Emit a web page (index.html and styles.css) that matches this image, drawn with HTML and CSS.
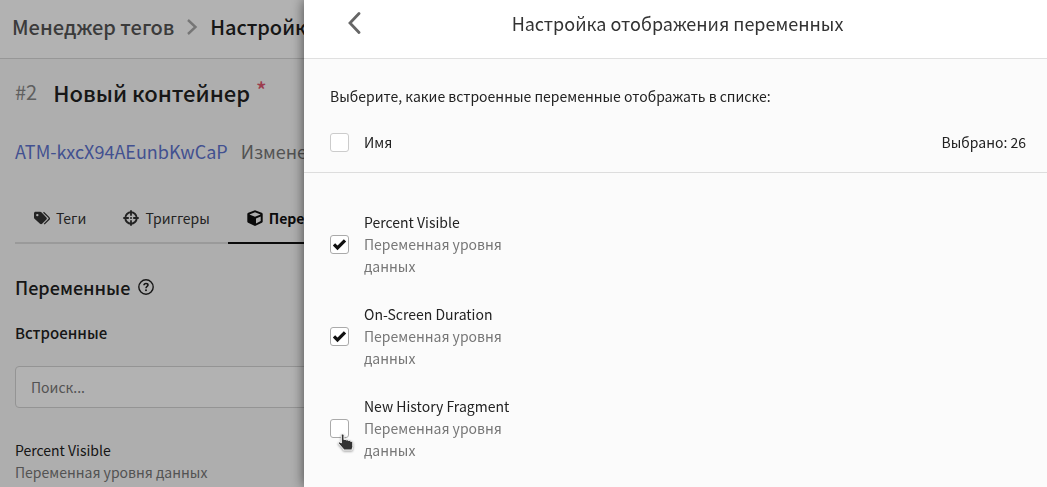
FILE: index.html
```html
<!DOCTYPE html>
<html lang="ru">
<head>
<meta charset="utf-8">
<title>Настройка отображения переменных</title>
<link rel="stylesheet" href="styles.css">
</head>
<body>
<div class="page">
  <header class="topbar">
    <nav class="crumbs">
      <a class="crumb" href="#">Менеджер тегов</a>
      <svg class="crumb-arrow" viewBox="0 0 12 18" aria-hidden="true"><path d="M2 2l7.500 7-7.500 7" fill="none" stroke="currentColor" stroke-width="2.400"/></svg>
      <span class="crumb-current">Настройка контейнера</span>
    </nav>
  </header>
  <main class="content">
    <div class="title-row">
      <span class="number">#2</span>
      <h1 class="title">Новый контейнер</h1>
      <span class="required">*</span>
    </div>
    <div class="meta-row">
      <a class="code" href="#">ATM-kxcX94AEunbKwCaP</a>
      <span class="changed">Изменен</span>
    </div>
    <nav class="tabs">
      <button class="tab" type="button">
        <svg class="tab-icon" viewBox="0 0 16 16" aria-hidden="true"><path d="M0 3.300C0 2.500.700 1.800 1.500 1.800h4.700c.500 0 .900.200 1.200.500l5 5.100c.600.600.600 1.500 0 2.100l-4.300 4.300c-.600.600-1.500.600-2.100 0L.500 8.800C.200 8.500 0 8 0 7.600zM3.300 3.900a1.200 1.200 0 1 0 0 2.400 1.200 1.200 0 0 0 0-2.400z" fill="currentColor" fill-rule="evenodd"/><path d="M9.500 2.200l5.300 5.200c.600.600.600 1.500 0 2.100l-4.600 4.600" fill="none" stroke="currentColor" stroke-width="1.300"/></svg>
        Теги
      </button>
      <button class="tab" type="button">
        <svg class="tab-icon" viewBox="0 0 16 16" aria-hidden="true"><g fill="none" stroke="currentColor"><circle cx="8" cy="8" r="5.700" stroke-width="1.900"/><path d="M8 .300v5.500M8 10.200v5.500M.300 8h5.500M10.200 8h5.500" stroke-width="1.800"/></g><circle cx="8" cy="8" r="1" fill="currentColor"/></svg>
        Триггеры
      </button>
      <button class="tab tab-active" type="button">
        <svg class="tab-icon" viewBox="0 0 16 16" aria-hidden="true"><path d="M8 .300l6.700 2.500c.600.200 1 .700 1 1.300v7.300c0 .500-.300 1-.800 1.300L8 16l-6.900-3.300c-.500-.300-.800-.800-.800-1.300V4.100c0-.600.400-1.100 1-1.300zM8 2.300L2.400 4.400v.100L8 6.800l5.600-2.300v-.100zM9 8.500v4.900l4.700-2.300V6.500z" fill="currentColor" fill-rule="evenodd"/></svg>
        Переменные
      </button>
    </nav>
    <div class="section-head">
      <h2 class="section-title">Переменные</h2>
      <svg class="help" viewBox="0 0 16 16" aria-hidden="true"><g fill="none" stroke="currentColor" stroke-width="1.400"><circle cx="8" cy="8" r="7.200"/><path d="M6 6.300C6 5.100 6.800 4.500 8 4.500s2 .700 2 1.600C10 7.400 8 7.500 8 9.200" stroke-width="1.600"/></g><circle cx="8" cy="11.300" r="1" fill="currentColor"/></svg>
    </div>
    <h3 class="group-title">Встроенные</h3>
    <input class="search" type="text" placeholder="Поиск..." aria-label="Поиск">
    <div class="variable">
      <div class="name">Percent Visible</div>
      <div class="kind">Переменная уровня данных</div>
    </div>
  </main>
</div>

<div class="backdrop">
  <section class="drawer" role="dialog" aria-labelledby="drawer-title">
    <header class="drawer-head">
      <button class="back" type="button" aria-label="Назад">
        <svg class="back-icon" viewBox="0 0 14 22" aria-hidden="true"><path d="M12 1.500L3 11l9 9.500" fill="none" stroke="currentColor" stroke-width="2.800" stroke-linecap="round"/></svg>
      </button>
      <h2 class="drawer-title" id="drawer-title">Настройка отображения переменных</h2>
    </header>
    <div class="intro">
      <p class="prompt">Выберите, какие встроенные переменные отображать в списке:</p>
      <div class="all-row">
        <label class="all"><input class="check check-idle" type="checkbox"><span>Имя</span></label>
        <span class="count">Выбрано: 26</span>
      </div>
    </div>
    <div class="list">
      <label class="option">
        <input class="check" type="checkbox" checked>
        <span class="option-text"><span class="name">Percent Visible</span><span class="kind">Переменная уровня данных</span></span>
      </label>
      <label class="option">
        <input class="check" type="checkbox" checked>
        <span class="option-text"><span class="name">On-Screen Duration</span><span class="kind">Переменная уровня данных</span></span>
      </label>
      <label class="option">
        <span class="check-wrap">
          <input class="check" type="checkbox">
          <svg class="pointer" viewBox="0 0 18 20" aria-hidden="true"><path d="M4.300 2.300c0-1.700 2.700-1.700 2.700 0v4.500c.500-.600 1.900-.500 2.200.300.700-.600 1.900-.300 2.200.500.700-.500 2-.200 2.200.700 1-.300 2.200.300 2.200 1.500v3.600c0 .900-.600 1.600-.600 2.600v1H6.300v-1L1.700 10.800c-.900-1.300.700-2.500 1.700-1.600l.900.900z" fill="#333" stroke="#fff" stroke-width="1"/></svg>
        </span>
        <span class="option-text"><span class="name">New History Fragment</span><span class="kind">Переменная уровня данных</span></span>
      </label>
    </div>
  </section>
</div>
</body>
</html>
```
FILE: styles.css
```css
* {
  box-sizing: border-box;
}

body {
  margin: 0;
  height: 100vh;
  overflow: hidden;
  background: #fafafa;
  color: #222;
  font: 14px/22px "Noto Sans CJK SC", "Noto Sans", sans-serif;
}

h1, h2, h3, p {
  margin: 0;
}

button, input {
  font: inherit;
  color: inherit;
}

a {
  text-decoration: none;
}

.topbar {
  padding: 10px 12px 14px;
  background: #fff;
  border-bottom: 1px solid #d9d9d9;
}

.crumbs {
  display: flex;
  align-items: center;
  gap: 12px;
  height: 34px;
  font-size: 20px;
  font-weight: 500;
  white-space: nowrap;
}

.crumb {
  color: #555;
}

.crumb-arrow {
  flex: none;
  width: 12px;
  height: 18px;
  color: #aaa;
}

.crumb-current {
  color: #222;
}

.content {
  padding: 15px;
}

.title-row {
  display: flex;
  align-items: center;
  height: 36px;
  font-size: 22px;
}

.number {
  margin-right: 16px;
  color: #888;
  font-size: 20px;
}

.title {
  font-size: 22px;
  font-weight: 500;
}

.required {
  align-self: flex-start;
  margin-left: 6px;
  padding-top: 4px;
  color: #e0566f;
  font-size: 22px;
  font-weight: 500;
}

.meta-row {
  display: flex;
  gap: 13px;
  padding: 30px 0 32px;
  font-size: 18px;
}

.code {
  color: #5f74cf;
}

.changed {
  color: #777;
}

.tabs {
  display: flex;
  height: 50px;
  border-bottom: 2px solid #ddd;
}

.tab {
  display: flex;
  align-items: center;
  gap: 6px;
  margin-bottom: -2px;
  padding: 0 18px 0 19px;
  border: 0;
  border-bottom: 2px solid transparent;
  background: none;
  color: #333;
  white-space: nowrap;
}

.tab-active {
  border-color: #111;
  color: #111;
  font-weight: 700;
}

.tab-icon {
  width: 16px;
  height: 16px;
}

.section-head {
  display: flex;
  align-items: center;
  gap: 8px;
  margin-top: 32px;
}

.section-title {
  font-size: 18px;
  font-weight: 500;
}

.help {
  width: 16px;
  height: 16px;
}

.group-title {
  margin: 24px 0 22px;
  font-size: 15px;
  font-weight: 500;
}

.search {
  display: block;
  width: 100%;
  height: 42px;
  padding: 0 15px;
  border: 1px solid #d4d4d4;
  border-radius: 4px;
  background: #fff;
}

.search::placeholder {
  color: #777;
}

.variable {
  margin-top: 31px;
}

.name {
  color: #222;
}

.kind {
  color: #777;
}

.backdrop {
  position: fixed;
  inset: 0;
  padding-left: 304px;
  background: rgba(0, 0, 0, 0.3);
}

.drawer {
  height: 100%;
  overflow: hidden;
  background: #fbfbfb;
  box-shadow: 0 0 12px rgba(0, 0, 0, 0.6);
}

.drawer-head {
  display: grid;
  grid-template-columns: 22px 1fr 18px;
  align-items: start;
  padding: 12px 40px 24px;
  background: #fff;
  border-bottom: 1px solid #e0e0e0;
}

.back {
  display: flex;
  padding: 0 3px;
  border: 0;
  background: none;
  color: #666;
}

.back-icon {
  width: 14px;
  height: 22px;
}

.drawer-title {
  color: #333;
  font-size: 18px;
  font-weight: 400;
  text-align: center;
}

.intro {
  padding: 26px 21px 19px 26px;
  border-bottom: 1px solid #ddd;
}

.all-row {
  display: flex;
  justify-content: space-between;
  margin-top: 24px;
}

.all {
  display: flex;
  align-items: center;
  gap: 15px;
}

.list {
  display: grid;
  gap: 26px;
  padding: 38px 26px;
}

.option {
  display: flex;
  align-items: center;
  gap: 15px;
}

.option-text {
  display: grid;
  width: 150px;
}

.check-wrap {
  position: relative;
  display: flex;
}

.check {
  display: block;
  appearance: none;
  width: 19px;
  height: 19px;
  margin: 0;
  border: 1px solid #aaa;
  border-radius: 3px;
  background: #fff;
}

.check-idle {
  border-color: #ccc;
}

.check:checked {
  background: #fff url("data:image/svg+xml,%3Csvg xmlns='http://www.w3.org/2000/svg' viewBox='0 0 17 17'%3E%3Cpath d='M3 8.300l3.500 3.500L14 4.300' fill='none' stroke='%23111' stroke-width='3.300'/%3E%3C/svg%3E") center / 17px 17px no-repeat;
}

.pointer {
  position: absolute;
  left: 7px;
  top: 14px;
  width: 18px;
  height: 20px;
  filter: drop-shadow(0 1px 1px rgba(0, 0, 0, 0.4));
}
```
